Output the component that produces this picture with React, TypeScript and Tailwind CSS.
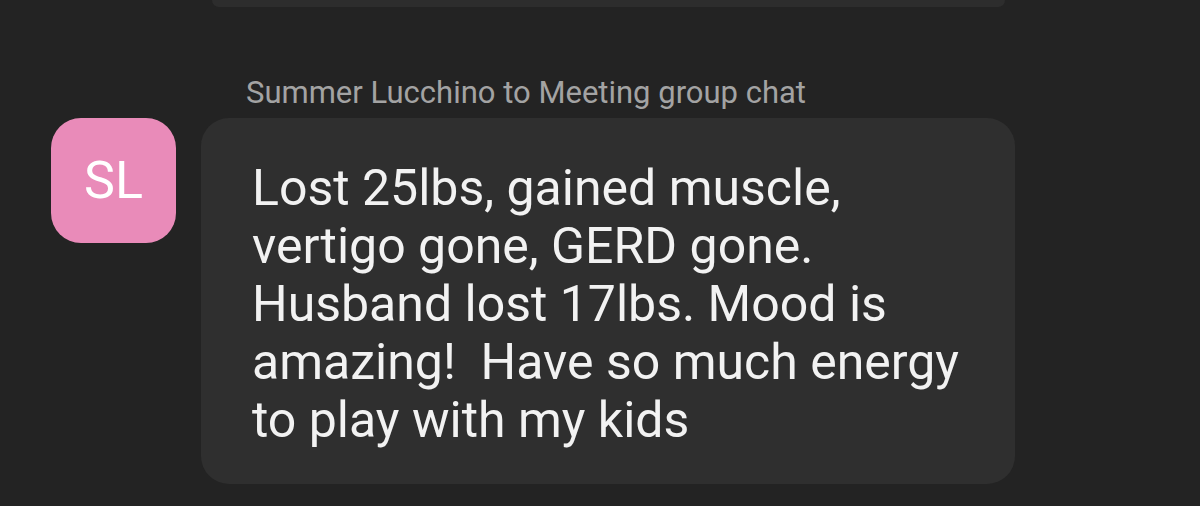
export default function App() {
  return (
    <div className="w-[1200px] h-[506px] overflow-hidden bg-[#232323] relative" style={{ fontFamily: "Roboto, sans-serif" }}>
      <div className="h-[7px] ml-[212px] w-[793px] bg-[#2d2d2d] rounded-b-[28px]" />
      <div className="pt-[68px] pl-[246px] text-[31px] leading-[36px] text-[#a3a3a3]">
        Summer Lucchino to Meeting group chat
      </div>
      <div className="flex mt-[7px] pl-[51px]">
        <div className="w-[125px] h-[125px] rounded-[30px] bg-[#e98bb9] flex items-center justify-center text-white text-[52px]">
          SL
        </div>
        <div className="ml-[25px] w-[814px] h-[366px] rounded-[28px] bg-[#2f2f2f] pl-[51px] pt-[41px] text-[#f2f2f2] text-[50px] leading-[58px]">
          Lost 25lbs, gained muscle,<br />
          vertigo gone, GERD gone.<br />
          Husband lost 17lbs. Mood is<br />
          amazing!&nbsp; Have so much energy<br />
          to play with my kids
        </div>
      </div>
    </div>
  );
}
